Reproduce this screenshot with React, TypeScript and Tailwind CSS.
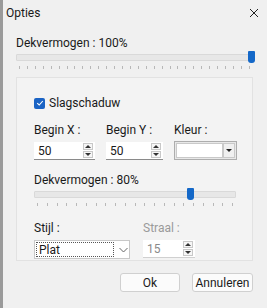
import { clsx } from "clsx";

function Ticks({ count }: { count: number }) {
  return (
    <div className="flex justify-between px-[3px] pt-[5px]">
      {Array.from({ length: count }).map((_, i) => (
        <div key={i} className="h-[3px] w-px bg-[#b8b8b8]" />
      ))}
    </div>
  );
}

function Slider({ thumbLeft, ticks }: { thumbLeft: number; ticks: number }) {
  return (
    <div className="relative">
      <div className="h-[7px] rounded-[1px] border border-[#d9d9d9] bg-[#e7e7e7]" />
      <div
        className="absolute top-[-3px] h-[12px] w-[7px] rounded-t-[1px] rounded-b-[3px] bg-[#1468c8]"
        style={{ left: thumbLeft }}
      />
      <Ticks count={ticks} />
    </div>
  );
}

function Spinner() {
  return (
    <div className="flex flex-col gap-px">
      <div className="flex h-[7px] w-[10px] items-center justify-center border border-[#c8c8c8] bg-[#f6f6f6]">
        <div className="h-0 w-0 border-x-[3px] border-b-[3px] border-x-transparent border-b-[#333]" />
      </div>
      <div className="flex h-[7px] w-[10px] items-center justify-center border border-[#c8c8c8] bg-[#f6f6f6]">
        <div className="h-0 w-0 border-x-[3px] border-t-[3px] border-x-transparent border-t-[#333]" />
      </div>
    </div>
  );
}

function SpinInput({ value, width, disabled }: { value: string; width: string; disabled?: boolean }) {
  return (
    <div
      className={clsx(
        "flex h-[18px] items-center justify-between border-b bg-white pl-[4px] pr-[2px]",
        width,
        disabled ? "border-[#d0d0d0] text-[#8a8a8a]" : "border-[#8a8a8a] text-[#1a1a1a]"
      )}
    >
      <span>{value}</span>
      <Spinner />
    </div>
  );
}

export default function App() {
  return (
    <div
      className="h-[308px] w-[267px] overflow-hidden border-l-[3px] border-[#9a9a9a] bg-[#f0f0f0] text-[12px] leading-none text-[#1a1a1a]"
      style={{ fontFamily: "Roboto, sans-serif" }}
    >
      <div className="flex h-[25px] items-center justify-between pl-[3px] pr-[8px]">
        <span className="text-[12px]">Opties</span>
        <svg width="10" height="10" viewBox="0 0 10 10">
          <path d="M1 1L9 9M9 1L1 9" stroke="#222" strokeWidth="1" />
        </svg>
      </div>

      <div className="px-[13px]">
        <div className="pt-[12px]">Dekvermogen : 100%</div>
        <div className="mt-[5px] w-[237px]">
          <Slider thumbLeft={232} ticks={30} />
        </div>

        <div className="mt-[8px] h-[184px] w-[237px] border border-[#e2e2e2] bg-[#f3f3f3] px-[17px] pt-[19px]">
          <div className="flex items-center gap-[4px]">
            <div className="flex h-[11px] w-[11px] items-center justify-center rounded-[2px] bg-[#1a63c4]">
              <svg width="8" height="8" viewBox="0 0 8 8">
                <path d="M1.2 4.2L3.2 6L6.8 2" fill="none" stroke="white" strokeWidth="1.1" />
              </svg>
            </div>
            <span>Slagschaduw</span>
          </div>

          <div className="mt-[15px] flex gap-[11px]">
            <div className="flex flex-col gap-[6px]">
              <span>Begin X :</span>
              <SpinInput value="50" width="w-[61px]" />
            </div>
            <div className="flex flex-col gap-[6px]">
              <span>Begin Y :</span>
              <SpinInput value="50" width="w-[57px]" />
            </div>
            <div className="flex flex-col gap-[5px]">
              <span>Kleur :</span>
              <div className="flex h-[19px] w-[63px] border border-[#adadad] bg-[#e8e8e8] p-px">
                <div className="flex-1 border border-[#c9c9c9] bg-white" />
                <div className="flex w-[12px] items-center justify-center border border-[#c9c9c9] bg-[#f0f0f0]">
                  <div className="h-0 w-0 border-x-[3px] border-t-[3px] border-x-transparent border-t-[#222]" />
                </div>
              </div>
            </div>
          </div>

          <div className="mt-[14px]">Dekvermogen : 80%</div>
          <div className="mt-[5px] w-[202px]">
            <Slider thumbLeft={153} ticks={21} />
          </div>

          <div className="mt-[16px] flex gap-[13px]">
            <div className="flex flex-col gap-[6px]">
              <span>Stijl :</span>
              <div className="flex h-[19px] w-[96px] items-center border border-[#c8c8c8] bg-white p-[1px]">
                <div className="flex h-full w-[78px] items-center border border-dotted border-[#555] pl-[2px]">Plat</div>
                <svg className="ml-[5px]" width="9" height="6" viewBox="0 0 9 6">
                  <path d="M0.5 1L4.5 5L8.5 1" fill="none" stroke="#666" strokeWidth="1" />
                </svg>
              </div>
            </div>
            <div className="flex flex-col gap-[6px]">
              <span className="text-[#9a9a9a]">Straal :</span>
              <SpinInput value="15" width="w-[52px]" disabled />
            </div>
          </div>
        </div>

        <div className="mt-[12px] flex justify-end gap-[12px] pr-[1px]">
          <div className="flex h-[19px] w-[60px] items-center justify-center rounded-[3px] border border-[#d0d0d0] bg-[#fbfbfb]">Ok</div>
          <div className="flex h-[19px] w-[61px] items-center justify-center rounded-[3px] border border-[#d0d0d0] bg-[#fbfbfb]">Annuleren</div>
        </div>
      </div>
    </div>
  );
}
